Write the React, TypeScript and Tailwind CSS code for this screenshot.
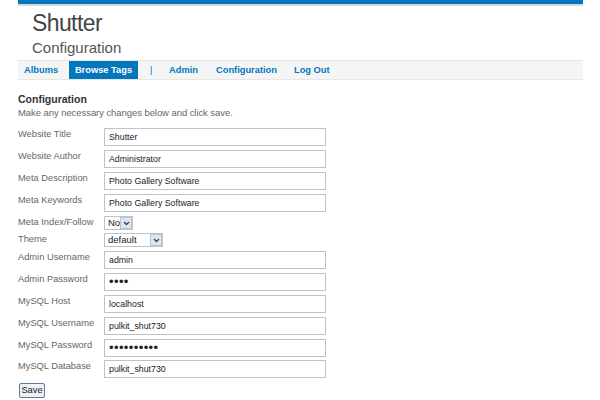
const F = "font-['Liberation_Sans',Arial,sans-serif]";

function Row({ label, value, password, className = "h-[22px]" }: { label: string; value: string; password?: boolean; className?: string }) {
  return (
    <div className={`flex items-start ${className}`}>
      <label className="w-[86px] shrink-0 whitespace-nowrap text-[9.3px] leading-[13px] text-[#666]">{label}</label>
      <input
        readOnly
        type={password ? "password" : "text"}
        value={value}
        className={`w-[222px] h-[18px] border border-[#bcc3c9] bg-white px-[4px] pb-[1px] text-[#222] outline-none ${password ? "text-[13px] tracking-[0.4px]" : "text-[8.8px]"}`}
      />
    </div>
  );
}

function Pick({ label, value, w, btn, className }: { label: string; value: string; w: string; btn: string; className: string }) {
  return (
    <div className={`flex items-start ${className}`}>
      <label className="w-[86px] shrink-0 whitespace-nowrap text-[9.3px] leading-[13px] text-[#666]">{label}</label>
      <div className={`${w} h-[14px] border border-[#bcc3c9] bg-white flex items-center justify-between pl-[3px] text-[9.5px] text-[#222]`}>
        <span>{value}</span>
        <span className={`${btn} h-[12px] bg-[#dfe6ee] border border-[#b8c4d2] flex items-center justify-center`}>
          <svg width="7" height="5" viewBox="0 0 7 5"><path d="M1 1l2.5 2.5L6 1" fill="none" stroke="#33475f" strokeWidth="1.4" /></svg>
        </span>
      </div>
    </div>
  );
}

export default function App() {
  return (
    <div className={`${F} w-[600px] h-[400px] overflow-hidden bg-white`}>
      <div className="mx-[18px] w-[565px]">
        <div className="h-[4px] bg-[#0277bd]" />
        <div className="h-[2px] bg-[#d5d9dc]" />
        <div className="pl-[14px] h-[54px]">
          <h1 className="text-[23px] leading-[28px] tracking-[-0.6px] pt-[3px] text-[#444] h-[33px]">Shutter</h1>
          <h2 className="text-[15px] leading-[18px] text-[#555]">Configuration</h2>
        </div>
        <nav className="flex h-[20px] items-stretch border-y border-[#e6e6e6] bg-[#f5f5f5] text-[9.3px] font-bold text-[#0277bd]">
          <a className="ml-[6px] w-[45px] flex items-center pt-[1px]">Albums</a>
          <a className="w-[69px] flex items-center justify-center pt-[1px] bg-[#0277bd] text-white">Browse Tags</a>
          <a className="ml-[12px] w-[6px] flex items-center pt-[1px] font-normal">|</a>
          <a className="ml-[13px] w-[47px] flex items-center pt-[1px]">Admin</a>
          <a className="w-[78px] flex items-center pt-[1px]">Configuration</a>
          <a className="flex items-center pt-[1px]">Log Out</a>
        </nav>
        <h3 className="mt-[13px] text-[10.5px] leading-[13px] font-bold text-[#333]">Configuration</h3>
        <p className="text-[9.5px] leading-[13px] tracking-[-0.07px] text-[#666]">Make any necessary changes below and click save.</p>
        <div className="mt-[9px]">
          <Row label="Website Title" value="Shutter" />
          <Row label="Website Author" value="Administrator" />
          <Row label="Meta Description" value="Photo Gallery Software" />
          <Row label="Meta Keywords" value="Photo Gallery Software" />
          <Pick label="Meta Index/Follow" value="No" w="w-[29px]" btn="w-[12px]" className="h-[17px]" />
          <Pick label="Theme" value="default" w="w-[59px]" btn="w-[12px]" className="h-[18px]" />
          <Row label="Admin Username" value="admin" />
          <Row label="Admin Password" value="test" password />
          <Row label="MySQL Host" value="localhost" />
          <Row label="MySQL Username" value="pulkit_shut730" />
          <Row label="MySQL Password" value="pulkitshut" password className="h-[21px]" />
          <Row label="MySQL Database" value="pulkit_shut730" className="h-[23px]" />
        </div>
        <button className="block ml-[1px] w-[26px] h-[15px] rounded-[2px] border border-[#5b7a99] bg-[#eef1f5] text-[9.3px] leading-none text-[#222]">Save</button>
      </div>
    </div>
  );
}
